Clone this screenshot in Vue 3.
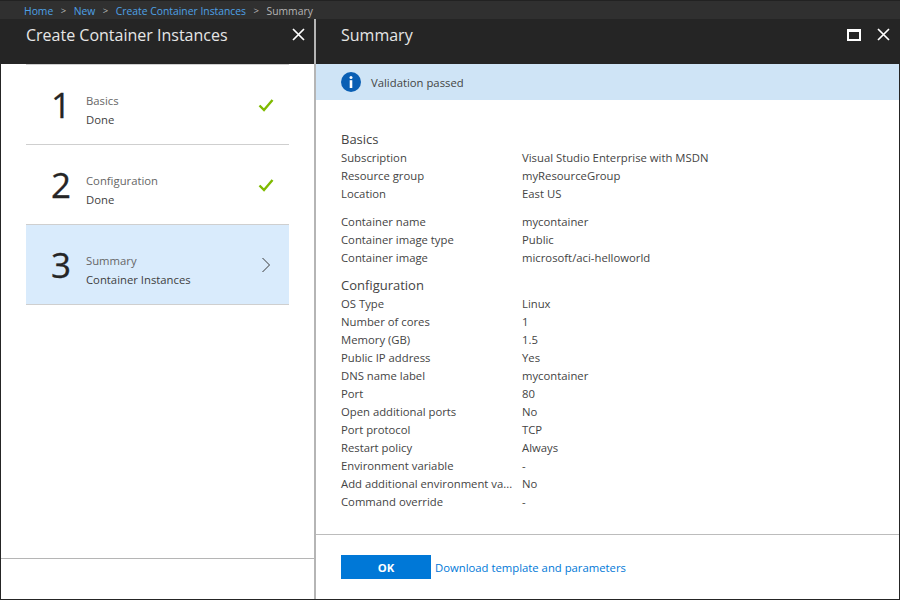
<script setup>
const steps = [
  { n: 1, title: 'Basics', sub: 'Done', done: true },
  { n: 2, title: 'Configuration', sub: 'Done', done: true },
  { n: 3, title: 'Summary', sub: 'Container Instances', done: false },
]
const groups = [
  { heading: 'Basics', rows: [
    ['Subscription', 'Visual Studio Enterprise with MSDN'],
    ['Resource group', 'myResourceGroup'],
    ['Location', 'East US'],
  ]},
  { rows: [
    ['Container name', 'mycontainer'],
    ['Container image type', 'Public'],
    ['Container image', 'microsoft/aci-helloworld'],
  ]},
  { heading: 'Configuration', rows: [
    ['OS Type', 'Linux'],
    ['Number of cores', '1'],
    ['Memory (GB)', '1.5'],
    ['Public IP address', 'Yes'],
    ['DNS name label', 'mycontainer'],
    ['Port', '80'],
    ['Open additional ports', 'No'],
    ['Port protocol', 'TCP'],
    ['Restart policy', 'Always'],
    ['Environment variable', '-'],
    ['Add additional environment va...', 'No'],
    ['Command override', '-'],
  ]},
]
</script>

<template>
  <div class="page">
    <nav class="crumbs">
      <a>Home</a><span class="sep">&gt;</span>
      <a>New</a><span class="sep">&gt;</span>
      <a>Create Container Instances</a><span class="sep">&gt;</span>
      <span class="cur">Summary</span>
    </nav>
    <div class="blades">
      <section class="blade left">
        <header class="head">
          <h1>Create Container Instances</h1>
          <svg class="x" width="13" height="13" viewBox="0 0 13 13"><path d="M1 1l11 11M12 1L1 12" stroke="#fff" stroke-width="1.7" fill="none"/></svg>
        </header>
        <div class="steps">
          <div v-for="s in steps" :key="s.n" class="step" :class="{ active: !s.done }">
            <div class="num">{{ s.n }}</div>
            <div class="txt">
              <div class="t">{{ s.title }}</div>
              <div class="s">{{ s.sub }}</div>
            </div>
            <svg v-if="s.done" class="ic" width="16" height="14" viewBox="0 0 16 14"><path d="M1.5 7.5l4.500 4.500L14.500 2" stroke="#7fba00" stroke-width="2.400" fill="none"/></svg>
            <svg v-else class="ic" width="16" height="16" viewBox="0 0 16 16"><path d="M4.500 1l7 7-7 7" stroke="#3a3a3a" stroke-width="1" fill="none"/></svg>
          </div>
        </div>
        <div class="leftfoot"></div>
      </section>
      <section class="blade right">
        <header class="head rhead">
          <h1>Summary</h1>
          <div class="tools">
            <svg width="14" height="12" viewBox="0 0 14 12"><path fill-rule="evenodd" d="M0 0h14v12H0zM2 3v7h10V3z" fill="#fff"/></svg>
            <svg width="13" height="13" viewBox="0 0 13 13"><path d="M1 1l11 11M12 1L1 12" stroke="#fff" stroke-width="1.700" fill="none"/></svg>
          </div>
        </header>
        <div class="banner">
          <svg width="20" height="20" viewBox="0 0 20 20"><circle cx="10" cy="10" r="10" fill="#0a5fb4"/><rect x="8.700" y="8.200" width="2.600" height="7.800" fill="#fff"/><circle cx="10" cy="5.600" r="1.500" fill="#fff"/></svg>
          <span>Validation passed</span>
        </div>
        <div class="body">
          <div v-for="(g, i) in groups" :key="i" class="group">
            <h2 v-if="g.heading">{{ g.heading }}</h2>
            <div v-for="r in g.rows" :key="r[0]" class="row">
              <span class="k">{{ r[0] }}</span>
              <span class="v">{{ r[1] }}</span>
            </div>
          </div>
        </div>
        <footer class="foot">
          <button class="ok">OK</button>
          <a class="dl">Download template and parameters</a>
        </footer>
      </section>
    </div>
  </div>
</template>

<style>
html, body { margin: 0; }
</style>

<style scoped>
.page { width: 900px; height: 600px; display: flex; flex-direction: column; font-family: "Open Sans", "Noto Sans", sans-serif; font-size: 11.3px; background: #fff; overflow: hidden; color: #444; }
.crumbs { height: 19px; flex: none; background: #303030; border-top: 1px solid #222; box-sizing: border-box; display: flex; align-items: center; padding-left: 24px; padding-top: 1px; font-size: 10.35px; color: #59a6ea; }
.crumbs a { color: #4ea1e6; }
.sep { color: #bbb; margin: 0 7.5px; font-size: 9.5px; }
.cur { color: #b5b5b5; }
.blades { flex: 1; display: flex; min-height: 0; border-left: 1px solid #252525; border-right: 1px solid #252525; border-bottom: 1px solid #252525; }
.blade { display: flex; flex-direction: column; }
.left { width: 313px; flex: none; border-right: 2px solid #b5b5b5; position: relative; }
.right { flex: 1; min-width: 0; }
.head { height: 45px; flex: none; background: #252525; color: #e6e6e6; display: flex; align-items: flex-start; justify-content: space-between; box-sizing: border-box; padding: 6px 9px 0 25px; }
.head h1 { margin: 0; font-size: 16px; font-weight: 400; line-height: 20px; }
.head .x { margin-top: 3px; }
.rhead { padding-left: 25px; padding-right: 9px; }
.tools { display: flex; gap: 16px; align-items: center; margin-top: 3px; }
.steps { margin: 0 25px; border-top: 1px solid #cfcfcf; flex: 1; }
.step { height: 79px; border-bottom: 1px solid #cfcfcf; display: flex; align-items: center; position: relative; }
.step.active { background: #d9ebfc; }
.num { width: 60px; flex: none; padding-left: 25px; box-sizing: border-box; font-size: 35px; color: #252525; line-height: 40px; -webkit-text-stroke: 0.3px #252525; }
.txt { flex: 1; padding-top: 10px; }
.t { color: #666; font-size: 11.3px; line-height: 19px; }
.s { color: #3e3e3e; font-size: 11.3px; line-height: 19px; }
.ic { margin-right: 15px; }
.leftfoot { height: 40px; flex: none; border-top: 1px solid #b5b5b5; }
.banner { height: 36px; flex: none; background: #cfe4f6; display: flex; align-items: center; padding-left: 25px; gap: 10px; color: #444; }
.body { flex: 1; padding: 29px 25px 0; min-height: 0; }
.group { margin-bottom: 10px; }
.group + .group + .group { margin-top: -2px; }
.group h2 { margin: 0; font-size: 13px; font-weight: 400; color: #444; line-height: 20px; }
.row { display: flex; height: 18px; line-height: 18px; color: #444; }
.k { width: 181px; flex: none; white-space: nowrap; }
.foot { height: 65px; flex: none; border-top: 1px solid #bcbcbc; display: flex; align-items: center; padding-left: 25px; box-sizing: border-box; }
.ok { width: 90px; height: 24px; background: #0078d7; color: #fff; border: 0; font-family: inherit; font-size: 11.3px; font-weight: 700; padding: 0; }
.dl { color: #0078d7; margin-left: 4px; }
</style>
